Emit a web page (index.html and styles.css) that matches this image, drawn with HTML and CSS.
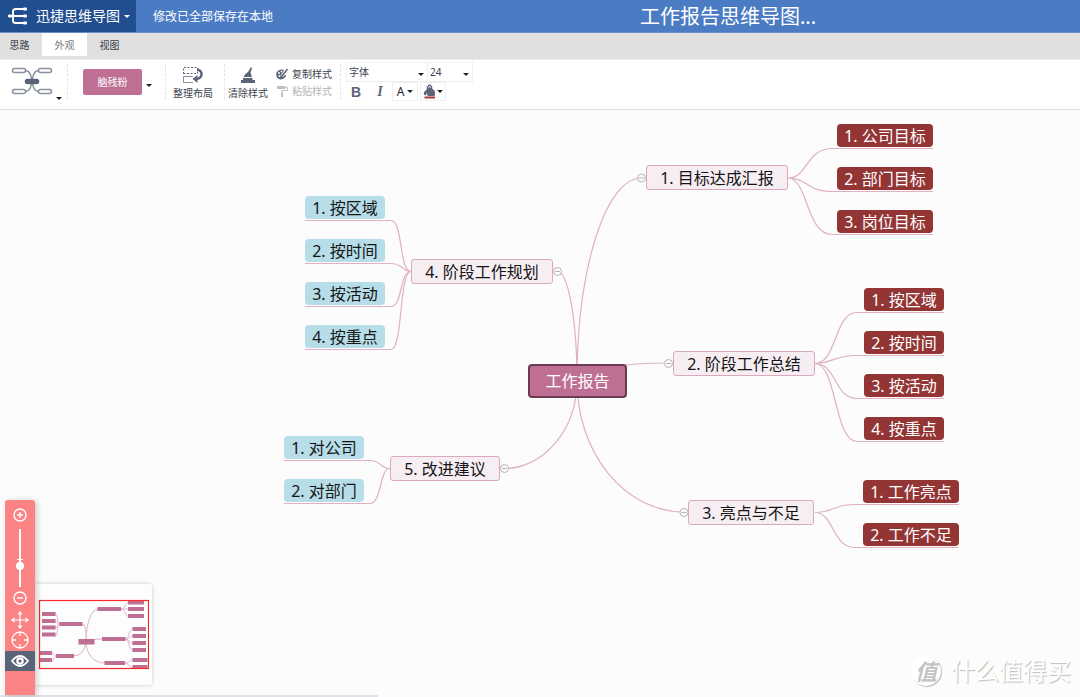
FILE: index.html
```html
<!DOCTYPE html>
<html lang="zh-CN">
<head>
<meta charset="utf-8">
<meta name="viewport" content="width=device-width, initial-scale=1">
<title>工作报告思维导图</title>
<link rel="stylesheet" href="styles.css">
</head>
<body>
<header class="topbar">
  <button class="brand" type="button">
    <svg width="20" height="18" viewBox="0 0 20 18" fill="none" stroke="#fff" stroke-width="2"><path d="M0 9H18M18 2H8Q5 2 5 4.500V13.500Q5 16 8 16H18"/><g fill="#fff" stroke="none"><rect x="15" y=".5" width="4" height="3" rx="1"/><rect x="15" y="7.500" width="4" height="3" rx="1"/><rect x="15" y="14.500" width="4" height="3" rx="1"/><circle cx="2" cy="9" r="1.700"/></g></svg>
    <span>迅捷思维导图</span><i class="caret"></i>
  </button>
  <p class="saved">修改已全部保存在本地</p>
  <h1 class="title">工作报告思维导图...</h1>
</header>

<nav class="tabs">
  <button class="tab" type="button">思路</button>
  <button class="tab tab-active" type="button">外观</button>
  <button class="tab" type="button">视图</button>
</nav>

<div class="toolbar">
  <div class="group group-layout">
    <button class="tool layout-pick" type="button" aria-label="布局">
      <svg width="42" height="28" viewBox="0 0 42 28" fill="none" stroke="#8a90a0" stroke-width="1.500"><rect x="1.500" y="1.500" width="13" height="4" rx="2"/><rect x="27.500" y="1.500" width="13" height="4" rx="2"/><rect x="1.500" y="22.500" width="13" height="4" rx="2"/><rect x="27.500" y="22.500" width="13" height="4" rx="2"/><path d="M14.500 3.500C19 4 20 8 21 14C20 20 19 24 14.500 24.500M27.500 3.500C23 4 22 8 21 14C22 20 23 24 27.500 24.500"/><rect x="14.500" y="12.500" width="13" height="4" rx="2" fill="#5b6378" stroke="#5b6378"/></svg>
      <i class="caret"></i>
    </button>
  </div>
  <div class="group group-theme">
    <button class="theme" type="button">脑残粉</button>
    <button class="tool" type="button" aria-label="更多主题"><i class="caret"></i></button>
  </div>
  <div class="group group-arrange">
    <button class="tool stacked" type="button">
      <svg width="22" height="18" viewBox="0 0 22 18" fill="none" stroke="#5b6378"><path d="M1.500 8V1.500H15.500V7.500H1.500" stroke-dasharray="2 1.500"/><path d="M11 16.500H1.500V10.500H11" stroke="#8a90a0"/><path d="M15 3.500C21.500 4 21 13 14 13" stroke-width="2.500"/><path d="M15.500 9V17L10.500 13Z" fill="#5b6378" stroke="none"/></svg>
      <span>整理布局</span>
    </button>
  </div>
  <div class="group group-style">
    <button class="tool stacked" type="button">
      <svg width="18" height="18" viewBox="0 0 18 18" fill="#5b6378"><path d="M12 1L13 2L11.500 6.500L13 11H4.500Q6 7.500 9 6ZM4 12H13.500V14H16V17H2V14H4Z"/></svg>
      <span>清除样式</span>
    </button>
    <div class="pair">
      <button class="tool inline" type="button">
        <svg width="12" height="12" viewBox="0 0 12 12"><path d="M5 1.500C8 1 8.500 3 7 4.500L9 6.500Q11 8 8.500 10Q5 12.500 2 10.500Q-.5 8 .5 4.500Q2 2 5 1.500Z" fill="#5b6378"/><path d="M11.500 1L6 8" stroke="#fff" stroke-width="3"/><path d="M11.500 1L6 8" stroke="#5b6378" stroke-width="1.500"/><g fill="#fff"><circle cx="3" cy="5" r="1"/><circle cx="5.500" cy="3.500" r=".9"/><circle cx="3.500" cy="8" r="1"/></g></svg>
        <span>复制样式</span>
      </button>
      <button class="tool inline" type="button" disabled>
        <svg width="12" height="12" viewBox="0 0 12 12" fill="none" stroke="#bcbfc8"><path d="M1 2.500H9.500" stroke-width="3"/><path d="M9.500 2.500H11.500V5.500H6V8" /><path d="M6 7.500V12" stroke-width="2"/></svg>
        <span>粘贴样式</span>
      </button>
    </div>
  </div>
  <div class="fonts">
    <div class="row">
      <span class="pick pick-family"><select aria-label="字体"><option>字体</option></select><i class="caret"></i></span>
      <span class="pick pick-size"><select aria-label="字号"><option>24</option></select><i class="caret"></i></span>
    </div>
    <div class="row">
      <button class="tool glyph bold" type="button">B</button>
      <button class="tool glyph italic" type="button">I</button>
      <button class="tool boxed" type="button" aria-label="文字颜色">A<i class="caret"></i></button>
      <button class="tool boxed" type="button" aria-label="填充颜色">
        <svg width="13" height="15" viewBox="0 0 13 15"><path d="M4.500 6V3Q6.500-.5 8.500 3V6" fill="none" stroke="#5b6378" stroke-width="1.500"/><path d="M6.500 3L11.500 6.500Q12.500 10 11.500 12H4.500L4 9L2.500 11.500Q-.5 11 1.500 7.500Z" fill="#5b6378"/><path d="M1.500 12.500H12V14.500H1.500Z" fill="#a93232"/></svg>
        <i class="caret"></i>
      </button>
    </div>
  </div>
</div>

<main class="canvas">
  <svg class="links" width="1080" height="587" viewBox="0 110 1080 587" fill="none" stroke="#dfb1c3" stroke-width="1.200">
    <path d="M577 381A64 203 0 0 1 641 178M577 381A91 18 0 0 1 668 363M577 381A107 131 0 0 0 684 512M577 381A20 110 0 0 0 557 271M577 381A73 88 0 0 1 504 468.500"/>
    <path d="M788 178C808 178 806 148.500 832 148.500H933M788 178C808 178 806 191.500 832 191.500H933M788 178C808 178 806 234.500 832 234.500H933"/>
    <path d="M815 363.500C837 363.500 834 312.500 857 312.500H944M815 363.500C834 363.500 832 355.500 857 355.500H944M815 363.500C837 363.500 834 398.500 857 398.500H944M815 363.500C837 363.500 834 441.500 857 441.500H944"/>
    <path d="M815 512.500C834 512.500 832 504.500 855 504.500H959M815 512.500C834 512.500 832 547.500 855 547.500H959"/>
    <path d="M411 271.500C399 271.500 403 220.500 391 220.500H305M411 271.500C402 271.500 403 263.500 391 263.500H305M411 271.500C399 271.500 403 306.500 391 306.500H305M411 271.500C399 271.500 403 349.500 391 349.500H305"/>
    <path d="M390 468.500C379 468.500 382 460.500 370 460.500H284M390 468.500C379 468.500 382 503.500 370 503.500H284"/>
    <g fill="#fcfcfc" stroke="#b8b2b5" stroke-width="1">
      <circle cx="641.500" cy="178" r="4"/><circle cx="668.500" cy="363.500" r="4"/><circle cx="684" cy="512.500" r="4"/><circle cx="557.500" cy="271.500" r="4"/><circle cx="504.500" cy="468.500" r="4"/>
      <path d="M639 178H644M666 363.500H671M681.500 512.500H686.500M555 271.500H560M502 468.500H507"/>
    </g>
  </svg>

  <div class="node root">工作报告</div>
  <div class="node topic topic-1">1. 目标达成汇报</div>
  <div class="node topic topic-2">2. 阶段工作总结</div>
  <div class="node topic topic-3">3. 亮点与不足</div>
  <div class="node topic topic-4">4. 阶段工作规划</div>
  <div class="node topic topic-5">5. 改进建议</div>

  <ul class="leaves leaves-1 dark"><li>1. 公司目标</li><li>2. 部门目标</li><li>3. 岗位目标</li></ul>
  <ul class="leaves leaves-2 dark"><li>1. 按区域</li><li>2. 按时间</li><li>3. 按活动</li><li>4. 按重点</li></ul>
  <ul class="leaves leaves-3 dark"><li>1. 工作亮点</li><li>2. 工作不足</li></ul>
  <ul class="leaves leaves-4 light"><li>1. 按区域</li><li>2. 按时间</li><li>3. 按活动</li><li>4. 按重点</li></ul>
  <ul class="leaves leaves-5 light"><li>1. 对公司</li><li>2. 对部门</li></ul>

  <aside class="navigator">
    <div class="zoombar">
      <button class="zoom-btn" type="button" aria-label="放大"><svg width="14" height="14" viewBox="0 0 14 14" fill="none" stroke="#fff" stroke-width="1.400"><circle cx="7" cy="7" r="6"/><path d="M4 7H10M7 4V10"/></svg></button>
      <input class="zoom-range" type="range" min="0" max="100" value="34" aria-label="缩放">
      <button class="zoom-btn" type="button" aria-label="缩小"><svg width="14" height="14" viewBox="0 0 14 14" fill="none" stroke="#fff" stroke-width="1.400"><circle cx="7" cy="7" r="6"/><path d="M4 7H10"/></svg></button>
      <button class="zoom-btn tall" type="button" aria-label="移动"><svg width="18" height="18" viewBox="0 0 18 18" fill="none" stroke="#fff" stroke-width="1.200"><path d="M9 1V17M1 9H17M7 3.500L9 1L11 3.500M7 14.500L9 17L11 14.500M3.500 7L1 9L3.500 11M14.500 7L17 9L14.500 11"/></svg></button>
      <button class="zoom-btn tall" type="button" aria-label="居中"><svg width="18" height="18" viewBox="0 0 18 18" fill="none" stroke="#fff" stroke-width="1.300"><circle cx="9" cy="9" r="8"/><path d="M9 1V5M9 13V17M1 9H5M13 9H17"/></svg></button>
      <button class="zoom-btn tall eye" type="button" aria-label="预览"><svg width="18" height="12" viewBox="0 0 18 12"><path d="M1 6Q9-4 17 6Q9 16 1 6Z" fill="none" stroke="#fff" stroke-width="1.800"/><circle cx="9" cy="6" r="3.800" fill="#fff"/><circle cx="9" cy="6" r="1.600" fill="#5b6378"/></svg></button>
    </div>
    <div class="preview">
      <svg width="111" height="71" viewBox="38 599 111 71" fill="none">
        <path stroke="#dcb6c6" d="M86 642A12 33 0 0 1 98 609M86 642Q88 639 103 639M86 642A18 21 0 0 0 105 663M86 642Q87 624 82 624M86 642Q84 656 73 656M121 609C126 609 124 602.500 129 602.500M121 609H129M121 609C126 609 124 616.500 129 616.500M125 639C130 639 128 629 133 629M125 639C130 639 129 636 133 636M125 639C130 639 128 643 133 643M125 639C130 639 128 650 133 650M125 663C130 663 129 660 133 660M125 663C129 663 129 668 133 668M60 624C56 624 59 614 55 614M60 624C57 624 58 621 55 621M60 624C57 624 58 628 55 628M60 624C56 624 59 636 55 636M57 656C53 656 55 653 52 653M57 656C53 656 55 661 52 661"/>
        <path fill="#be6f93" d="M78.500 639h16v5.500h-16zM97.500 607h23.500v4h-23.500zM102 637h23.500v4H102zM104.500 661H125v4h-20.500zM59.500 622H82.500v4H59.500zM56 654H74v4H56zM128 601h16v3.500h-16zM128 607h16v4h-16zM128 614h16v4h-16zM132.500 627h13.500v4h-13.500zM132.500 634h13.500v4h-13.500zM132.500 641h13.500v4h-13.500zM132.500 648h13.500v4h-13.500zM132.500 658h15v4h-15zM132.500 665h15v3h-15zM42 612h13.500v4H42zM42 619h13.500v4H42zM42 625.500h13.500v4H42zM42 632.500h13.500v4H42zM40 651h12v4H40zM40 658h12v4H40z"/>
        <rect x="39.500" y="600.500" width="109" height="68" stroke="#f8282c" stroke-width="1.200"/>
      </svg>
    </div>
  </aside>

  <div class="watermark"><span class="seal">值</span><span>什么值得买</span></div>
  <div class="scrollbar"></div>
</main>
</body>
</html>
```
FILE: styles.css
```css
* { box-sizing: border-box; }

body {
  margin: 0;
  height: 100vh;
  display: flex;
  flex-direction: column;
  overflow: hidden;
  background: #fcfcfc;
  color: #3c424e;
  font-family: "Noto Sans", "Noto Sans CJK SC", sans-serif;
  font-size: 10px;
  line-height: 14px;
}

button, select, input { font: inherit; color: inherit; margin: 0; }
button { border: 0; padding: 0; background: none; cursor: pointer; }
svg { display: block; flex: none; }

.caret {
  flex: none;
  border: 3px solid transparent;
  border-top-color: #222;
  border-bottom-width: 0;
}

/* Top bar */
.topbar {
  flex: none;
  display: flex;
  align-items: center;
  height: 33px;
  background: #4a7bc3;
  border-bottom: 1px solid #6a8fc8;
  color: #fff;
}
.brand {
  display: flex;
  align-items: center;
  width: 136px;
  height: 32px;
  padding-left: 8px;
  gap: 8px;
  background: #214e90;
  font-size: 14px;
  line-height: 20px;
}
.brand span { white-space: nowrap; }
.brand .caret { border-top-color: #fff; margin-left: -4px; }
.saved {
  flex: 1;
  margin: 0;
  padding: 2px 0 0 17px;
  font-size: 12px;
  line-height: 18px;
}
.title {
  flex: none;
  width: 440px;
  margin: 0;
  padding-top: 2px;
  font-size: 20px;
  font-weight: 400;
  line-height: 30px;
}

/* Tabs */
.tabs {
  flex: none;
  display: flex;
  align-items: flex-start;
  height: 27px;
  background: #e0e0e0;
  border-bottom: 1px solid #ececec;
}
.tab { width: 45px; height: 23px; }
.tab:first-child { width: 42px; padding-right: 3px; }
.tab-active { background: #fff; color: #777; }

/* Toolbar */
.toolbar {
  flex: none;
  display: flex;
  height: 50px;
  background: #fff;
  border-bottom: 1px solid #e2e2e2;
}
.group {
  display: flex;
  align-items: flex-start;
  height: 36px;
  margin-top: 4px;
  border-right: 1px dashed #e4e4e4;
}
.tool { display: flex; align-items: center; }
.tool:disabled { color: #b4b4b4; }
.group-layout { width: 68px; padding: 3px 0 0 11px; }
.layout-pick { align-items: flex-end; gap: 3px; }
.layout-pick .caret { margin-bottom: -5px; }
.group-theme { width: 98px; padding: 5px 0 0 15px; gap: 4px; }
.group-theme .tool { height: 32px; }
.theme {
  width: 59px;
  height: 26px;
  border-radius: 2px;
  background: #be6f93;
  color: #fff;
}
.stacked { flex-direction: column; gap: 2px; }
.group-arrange { width: 59px; padding: 2px 0 0 7px; }
.group-style { width: 116px; padding: 2px 0 0 3px; gap: 8px; }
.pair { display: flex; flex-direction: column; gap: 3px; padding-top: 1px; }
.inline { gap: 4px; }
.fonts { padding: 2px 0 0 5px; }
.row { display: flex; align-items: center; }

.pick {
  position: relative;
  display: block;
  height: 20px;
  border: 1px solid #efefef;
}
.pick-family { width: 82px; }
.pick-size { width: 46px; margin-left: -1px; }
.pick select {
  display: block;
  width: 100%;
  height: 18px;
  padding: 0 2px;
  border: 0;
  background: none;
  appearance: none;
}
.pick .caret { position: absolute; right: 3px; bottom: 5px; pointer-events: none; }
.glyph {
  justify-content: center;
  width: 24px;
  height: 18px;
  color: #5b6378;
  font-size: 14px;
}
.glyph:first-child { width: 20px; }
.bold { font-family: "Liberation Sans", sans-serif; font-weight: 700; }
.italic { padding-left: 4px; font-family: "Liberation Serif", serif; font-style: italic; font-weight: 700; }
.boxed {
  justify-content: center;
  gap: 3px;
  width: 26px;
  height: 19px;
  margin-left: 2px;
  border: 1px solid #efefef;
  color: #222;
  font-size: 12px;
}
.boxed svg + .caret { margin-left: -2px; }

/* Mind map canvas */
.canvas {
  position: relative;
  flex: 1;
  min-height: 0;
  overflow: hidden;
  color: #151515;
  font-size: 16px;
  line-height: 24px;
}
.links { position: absolute; left: 0; top: 0; }
.node {
  position: absolute;
  display: flex;
  align-items: center;
  justify-content: center;
  white-space: nowrap;
}
.root {
  left: 528px;
  top: 254px;
  width: 99px;
  height: 34px;
  border: 2px solid #6a3b51;
  border-radius: 4px;
  background: #be6f93;
  color: #fff;
}
.topic {
  width: 142px;
  height: 25px;
  border: 1px solid #dba9bd;
  border-radius: 3px;
  background: #f7eef3;
}
.topic-1 { left: 646px; top: 55px; }
.topic-2 { left: 673px; top: 241px; }
.topic-3 { left: 688px; top: 390px; width: 126px; }
.topic-4 { left: 411px; top: 149px; }
.topic-5 { left: 390px; top: 346px; width: 110px; }

.leaves {
  position: absolute;
  display: flex;
  flex-direction: column;
  gap: 20px;
  margin: 0;
  padding: 0;
  list-style: none;
}
.leaves li {
  width: 80px;
  height: 23px;
  border-radius: 4px;
  line-height: 24px;
  text-align: center;
  white-space: nowrap;
}
.dark li { background: #933535; color: #fff; }
.light li { background: #b6dde8; }
.leaves-1 { left: 837px; top: 14px; }
.leaves-2 { left: 864px; top: 178px; }
.leaves-3 { left: 863px; top: 370px; }
.leaves-4 { left: 305px; top: 86px; }
.leaves-5 { left: 284px; top: 326px; }
.leaves-1 li, .leaves-3 li { width: 96px; }

/* Zoom bar and preview */
.navigator {
  position: absolute;
  left: 5px;
  bottom: 2px;
  display: flex;
  align-items: flex-end;
}
.zoombar {
  z-index: 1;
  display: flex;
  flex-direction: column;
  align-items: center;
  width: 30px;
  height: 195px;
  padding-top: 7px;
  border-radius: 3px 3px 0 0;
  background: #fc8383;
  box-shadow: 2px 1px 6px rgba(0, 0, 0, 0.2);
}
.zoom-btn {
  display: flex;
  align-items: center;
  justify-content: center;
  width: 30px;
  height: 16px;
}
.zoom-range {
  width: 12px;
  height: 58px;
  margin: 6px 0 3px;
  appearance: none;
  writing-mode: vertical-lr;
  direction: rtl;
  background:
    linear-gradient(#fff, #fff) center / 2px 100% no-repeat,
    linear-gradient(#fff, #fff) 3px 30px / 6px 1px no-repeat;
}
.zoom-range::-webkit-slider-thumb {
  appearance: none;
  width: 8px;
  height: 8px;
  border-radius: 50%;
  background: #fff;
}
.tall { height: 20px; }
.eye { background: #5b6378; margin-top: 1px; }
.tall:nth-of-type(3) { margin-top: 4px; }
.preview {
  width: 117px;
  height: 101px;
  margin-bottom: 10px;
  padding: 15px 0 0 3px;
  border-radius: 2px;
  background: #fdfdfd;
  box-shadow: 0 0 4px rgba(0, 0, 0, 0.2);
}

.watermark {
  position: absolute;
  right: 9px;
  bottom: 10px;
  display: flex;
  align-items: center;
  gap: 10px;
  color: #fff;
  font-size: 24px;
  line-height: 32px;
  text-shadow: 1px 1px 1px #bbb;
}
.seal {
  width: 30px;
  height: 30px;
  border-radius: 50%;
  background: #fff;
  box-shadow: 1px 1px 1px #bbb;
  color: #c4c4c4;
  font-size: 22px;
  font-weight: 700;
  line-height: 30px;
  text-align: center;
  text-shadow: none;
  font-style: italic;
}
.scrollbar {
  position: absolute;
  left: 0;
  bottom: 0;
  width: 35%;
  height: 2px;
  background: #e2e2e6;
}
```
